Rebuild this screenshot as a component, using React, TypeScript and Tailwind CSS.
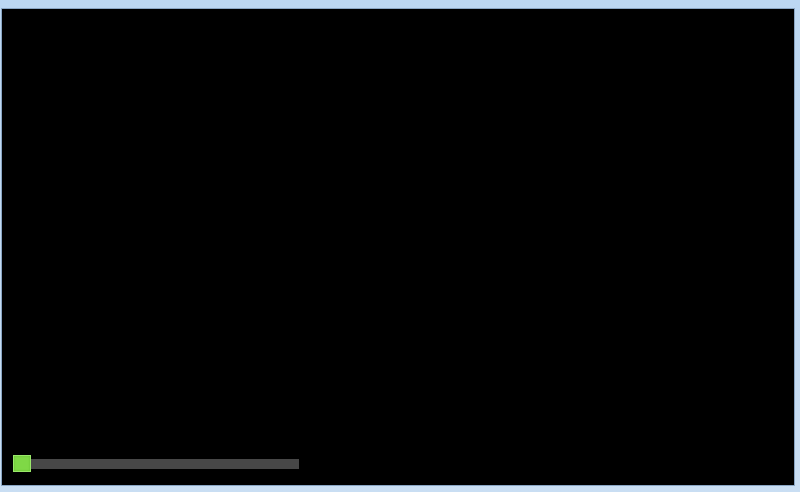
export default function App() {
  return (
    <div className="w-[800px] h-[492px] bg-gradient-to-b from-[#bcd7f2] to-[#c9def3] pt-[9px] pl-[2px] pr-[6px] pb-[7px] flex">
      <div className="flex-1 bg-black flex flex-col justify-end pl-[11px] pb-[13px] shadow-[0_0_0_1px_#8aa6c4]">
        <div className="flex items-center">
          <div className="w-[18px] h-[17px] bg-[#7fd846] border border-[#9ae86a] shadow-[inset_0_0_2px_#5fb62e]" />
          <div className="w-[268px] h-[10px] bg-[#474747]" />
        </div>
      </div>
    </div>
  );
}
